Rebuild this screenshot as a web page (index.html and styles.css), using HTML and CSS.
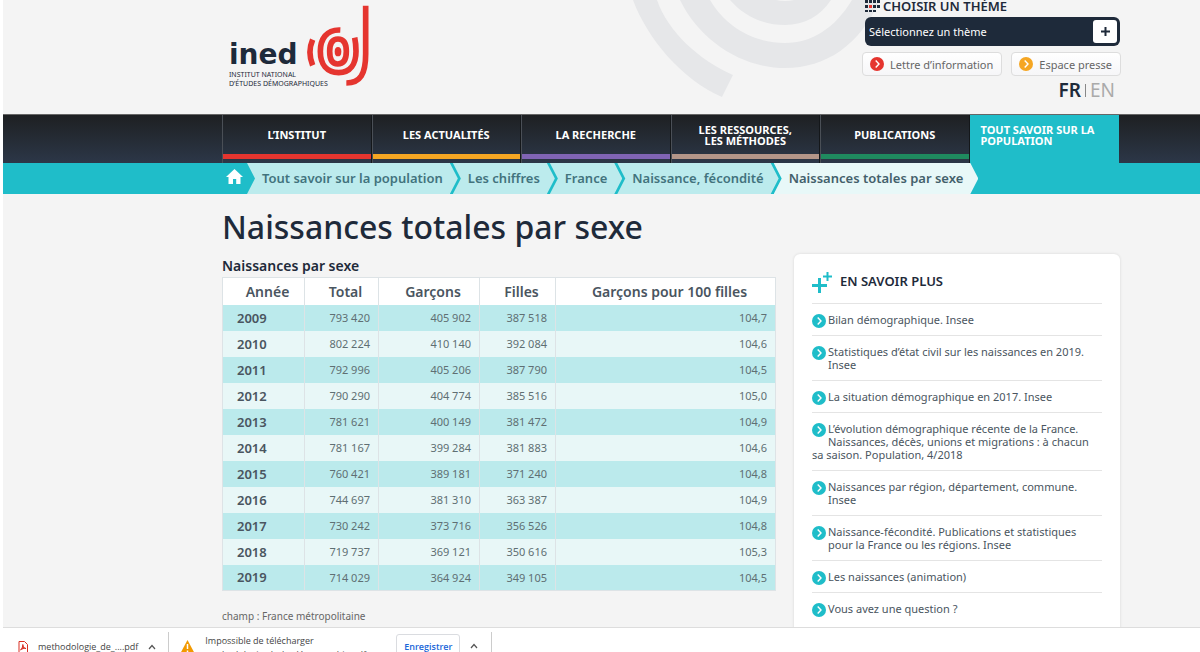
FILE: index.html
```html
<!DOCTYPE html>
<html lang="fr">
<head>
    <meta charset="UTF-8">
    <title>Naissances totales par sexe</title>
    <link rel="stylesheet" href="styles.css">
</head>
<body>
<!--symboles réutilisés-->
<svg class="defs" aria-hidden="true">
    <symbol id="arrow" viewBox="0 0 14 14">
        <circle cx="7" cy="7" r="7" fill="currentColor"/>
        <path d="M5.7 3.6 L9 7.1 L5.7 10.6" fill="none" stroke="#fff" stroke-width="1.4"/>
    </symbol>
    <symbol id="caret" viewBox="0 0 8 6">
        <path d="M1 5 L4 1.5 L7 5" fill="none" stroke="#555" stroke-width="1.2"/>
    </symbol>
</svg>
<div class="page">
    <header class="header">
        <svg class="spiral" viewBox="0 0 260 114" aria-hidden="true">
            <path d="M13 0 C27 38 62 80 102 97 L113 75 C79 60 48 32 37 0 Z"/>
            <path d="M60 0 C80 41 122 68 165 68 C206 68 240 45 260 0 L232 0 C215 28 192 43 165 43 C134 43 106 27 90 0 Z"/>
            <path d="M110 0 C124 16 143 25 165 25 C185 25 200 16 211 0 L174 0 Q165 2 156 0 Z"/>
        </svg>
        <a class="logo" href="#">
            <span class="logo-text">
                <strong>ined</strong>
                <small>INSTITUT NATIONAL<br>D’ÉTUDES DÉMOGRAPHIQUES</small>
            </span>
            <svg viewBox="290 13 186 246" width="62" height="82" fill="none" stroke="#e5352f" stroke-width="17" aria-hidden="true">
                <ellipse cx="383" cy="153" rx="10" ry="14" fill="#e5352f" stroke="none"/>
                <path d="M383 115 C400 115 408 128 408 152 C408 177 400 190 382 190 C365 190 358 177 358 152 C358 128 366 115 383 115 Z"/>
                <path d="M390 88 C348 86 330 116 330 152 C330 192 350 216 385 216 C420 216 437 190 437 152 C437 135 436 125 433 111"/>
                <path d="M307 117 C297 140 297 170 307 194"/>
                <path d="M466 15 L466 160 C466 220 450 247 408 247"/>
            </svg>
        </a>
        <div class="tools">
            <label class="theme-label" for="theme">
                <svg width="15" height="13" viewBox="0 0 15 13" fill="#1e2a3a" aria-hidden="true">
                    <path d="M0 0h3v3H0zM4 0h3v3H4zM8 0h3v3H8zM12 0h3v3h-3zM0 5h3v3H0zM8 5h3v3H8zM12 5h3v3h-3zM0 10h3v2H0zM4 10h3v2H4zM8 10h3v2H8z"/>
                    <path d="M4 5h3v3H4z" fill="#e5352f"/>
                </svg>
                CHOISIR UN THÈME
            </label>
            <div class="theme">
                <select id="theme">
                    <option>Sélectionnez un thème</option>
                </select>
                <button type="button" aria-label="Ouvrir">
                    <svg width="9" height="9" viewBox="0 0 9 9"><path d="M4.5 0v9M0 4.5h9" stroke="#1e2a3a" stroke-width="2"/></svg>
                </button>
            </div>
            <div class="links">
                <a href="#"><svg class="red" width="14" height="14"><use href="#arrow"/></svg>Lettre d’information</a>
                <a href="#"><svg class="orange" width="14" height="14"><use href="#arrow"/></svg>Espace presse</a>
            </div>
            <div class="lang"><a class="current" href="#">FR</a><i></i><a href="#">EN</a></div>
        </div>
    </header>

    <nav class="nav">
        <ul>
            <li class="institut"><a href="#">L’INSTITUT</a></li>
            <li class="actualites"><a href="#">LES ACTUALITÉS</a></li>
            <li class="recherche"><a href="#">LA RECHERCHE</a></li>
            <li class="ressources"><a href="#">LES RESSOURCES,<br>LES MÉTHODES</a></li>
            <li class="publications"><a href="#">PUBLICATIONS</a></li>
            <li class="active"><a href="#">TOUT SAVOIR SUR LA<br>POPULATION</a></li>
        </ul>
    </nav>

    <div class="breadcrumb">
        <a class="home" href="#" aria-label="Accueil">
            <svg width="17" height="15" viewBox="0 0 17 15"><path d="M8.5 0 L17 8 H14.5 V15 H10.2 V10 H7 V15 H2.5 V8 H0 Z" fill="#fff"/></svg>
        </a>
        <ul>
            <li><a href="#">Tout savoir sur la population</a></li>
            <li><a href="#">Les chiffres</a></li>
            <li><a href="#">France</a></li>
            <li><a href="#">Naissance, fécondité</a></li>
            <li class="last">Naissances totales par sexe</li>
        </ul>
    </div>

    <div class="content">
        <main>
            <h1>Naissances totales par sexe</h1>
            <table>
                <caption>Naissances par sexe</caption>
                <colgroup><col class="c1"><col class="c2"><col class="c3"><col class="c4"><col></colgroup>
                <thead>
                <tr><th>Année</th><th>Total</th><th>Garçons</th><th>Filles</th><th>Garçons pour 100 filles</th></tr>
                </thead>
                <tbody>
                <tr><th>2009</th><td>793 420</td><td>405 902</td><td>387 518</td><td>104,7</td></tr>
                <tr><th>2010</th><td>802 224</td><td>410 140</td><td>392 084</td><td>104,6</td></tr>
                <tr><th>2011</th><td>792 996</td><td>405 206</td><td>387 790</td><td>104,5</td></tr>
                <tr><th>2012</th><td>790 290</td><td>404 774</td><td>385 516</td><td>105,0</td></tr>
                <tr><th>2013</th><td>781 621</td><td>400 149</td><td>381 472</td><td>104,9</td></tr>
                <tr><th>2014</th><td>781 167</td><td>399 284</td><td>381 883</td><td>104,6</td></tr>
                <tr><th>2015</th><td>760 421</td><td>389 181</td><td>371 240</td><td>104,8</td></tr>
                <tr><th>2016</th><td>744 697</td><td>381 310</td><td>363 387</td><td>104,9</td></tr>
                <tr><th>2017</th><td>730 242</td><td>373 716</td><td>356 526</td><td>104,8</td></tr>
                <tr><th>2018</th><td>719 737</td><td>369 121</td><td>350 616</td><td>105,3</td></tr>
                <tr><th>2019</th><td>714 029</td><td>364 924</td><td>349 105</td><td>104,5</td></tr>
                </tbody>
            </table>
            <p class="note">champ : France métropolitaine</p>
        </main>

        <aside class="more">
            <h2>
                <svg width="20" height="21" viewBox="0 0 20 21" stroke="#1fbdc9" aria-hidden="true">
                    <path d="M7.5 6v15M0 13.5h15" stroke-width="3"/>
                    <path d="M15.5 0v9M11 4.5h9" stroke-width="2"/>
                </svg>
                EN SAVOIR PLUS
            </h2>
            <ul>
                <li><a href="#"><svg width="14" height="14"><use href="#arrow"/></svg>Bilan démographique. Insee</a></li>
                <li><a href="#"><svg width="14" height="14"><use href="#arrow"/></svg>Statistiques d’état civil sur les naissances en 2019. Insee</a></li>
                <li><a href="#"><svg width="14" height="14"><use href="#arrow"/></svg>La situation démographique en 2017. Insee</a></li>
                <li><a href="#"><svg width="14" height="14"><use href="#arrow"/></svg>L’évolution démographique récente de la France. Naissances, décès, unions et migrations : à chacun sa saison. Population, 4/2018</a></li>
                <li><a href="#"><svg width="14" height="14"><use href="#arrow"/></svg>Naissances par région, département, commune.<br>Insee</a></li>
                <li><a href="#"><svg width="14" height="14"><use href="#arrow"/></svg>Naissance-fécondité. Publications et statistiques pour la France ou les régions. Insee</a></li>
                <li><a href="#"><svg width="14" height="14"><use href="#arrow"/></svg>Les naissances (animation)</a></li>
                <li><a href="#"><svg width="14" height="14"><use href="#arrow"/></svg>Vous avez une question ?</a></li>
            </ul>
        </aside>
    </div>
</div>

<!--barre des téléchargements-->
<div class="downloads">
    <div class="file">
        <svg width="10" height="12" viewBox="0 0 10 12" aria-hidden="true">
            <path d="M1 .5 H6.5 L9.5 3.5 V11.5 H1 Z" fill="#fff" stroke="#d93025"/>
            <path d="M2.5 9 C4 8 5 5 4.8 3.5 C5 6 6.5 7.5 8 7.5 C6 7 4 7.8 2.5 9 Z" fill="#d93025" stroke="#d93025"/>
        </svg>
        <span class="name">methodologie_de_....pdf</span>
        <button type="button" aria-label="Options"><svg width="8" height="6"><use href="#caret"/></svg></button>
    </div>
    <div class="file blocked">
        <svg width="15" height="14" viewBox="0 0 15 14" aria-hidden="true">
            <path d="M7.5 0 L15 14 H0 Z" fill="#f29900"/>
            <path d="M7.5 4v5M7.5 10.5v2" stroke="#fff" stroke-width="1.5"/>
        </svg>
        <span class="message">Impossible de télécharger<br>methodologie_de_la_démographie.pdf</span>
        <button type="button" class="save">Enregistrer</button>
        <button type="button" aria-label="Options"><svg width="8" height="6"><use href="#caret"/></svg></button>
    </div>
</div>
</body>
</html>
```
FILE: styles.css
```css
* {
    margin: 0;
    padding: 0;
    box-sizing: border-box;
}

body {
    display: flex;
    flex-direction: column;
    height: 100vh;
    overflow: hidden;
    background: #fff;
    color: #4a5560;
    font-family: "Noto Sans", "Open Sans", sans-serif;
    font-size: 11px;
}

ul {
    list-style: none;
}

a {
    color: inherit;
    text-decoration: none;
}

button, select {
    font-family: inherit;
    border: 0;
    background: none;
    cursor: pointer;
}

.defs {
    position: absolute;
    width: 0;
    height: 0;
}

.page {
    flex: 1;
    min-height: 0;
    margin-left: 3px;
    overflow: hidden;
    background: #f4f4f4;
}

/* header */
.header {
    position: relative;
    display: flex;
    justify-content: space-between;
    height: 114px;
    padding: 0 79px 0 226px;
}

.spiral {
    position: absolute;
    top: 0;
    right: 320px;
    width: 260px;
    height: 114px;
    fill: #e6e7e9;
}

.logo {
    display: flex;
    align-items: flex-start;
    gap: 8px;
    padding-top: 5px;
    color: #1e2a3a;
}

.logo-text {
    width: 70px;
    padding-top: 35px;
    white-space: nowrap;
}

.logo-text strong {
    display: block;
    font-family: "DejaVu Sans", sans-serif;
    font-size: 28px;
    line-height: 30px;
}

.logo-text small {
    display: block;
    font-size: 7px;
    line-height: 9px;
}

.tools {
    position: relative;
    display: flex;
    flex-direction: column;
    width: 259px;
}

.theme-label {
    display: flex;
    gap: 3px;
    padding-left: 3px;
    color: #1e2a3a;
    font-size: 13px;
    font-weight: 600;
    line-height: 13px;
}

.theme {
    display: flex;
    align-items: center;
    height: 29px;
    margin: 4px 1px 6px 3px;
    padding-right: 3px;
    border-radius: 6px;
    background: #1e2a3a;
}

.theme select {
    flex: 1;
    height: 29px;
    padding-left: 4px;
    color: #fff;
    font-size: 11px;
    appearance: none;
}

.theme button {
    display: flex;
    align-items: center;
    justify-content: center;
    width: 24px;
    height: 23px;
    border-radius: 3px;
    background: #fff;
}

.links {
    display: flex;
    justify-content: space-between;
}

.links a {
    display: flex;
    align-items: center;
    gap: 6px;
    height: 24px;
    padding: 0 8px 0 7px;
    border: 1px solid #ddd;
    border-radius: 4px;
    background: linear-gradient(#fff, #f6f6f8);
    color: #666;
    white-space: nowrap;
}

.red {
    color: #e5352f;
}

.orange {
    color: #f5a623;
}

.lang {
    display: flex;
    align-items: center;
    justify-content: flex-end;
    gap: 4px;
    padding-right: 6px;
    color: #aaa;
    font-size: 19px;
    line-height: 28px;
}

.lang i {
    width: 1px;
    height: 13px;
    background: #888;
}

.lang .current {
    color: #1e2a3a;
    font-weight: 600;
}

/* menu */
.nav {
    padding: 0 81px 0 219px;
    border-top: 1px solid #666;
    background: linear-gradient(#1e2022, #2c3748);
}

.nav ul {
    display: grid;
    grid-template-columns: repeat(6, 1fr);
}

.nav li {
    height: 48px;
    padding-bottom: 4px;
    border-left: 1px solid #4a4f56;
    border-right: 1px solid #14171a;
    color: #fff;
    font-weight: 700;
    line-height: 11px;
    text-align: center;
}

.nav li a {
    display: flex;
    align-items: center;
    justify-content: center;
    height: 44px;
    border-bottom: 5px solid #e5352f;
}

.nav .actualites a {
    border-color: #f5a623;
}

.nav .recherche a {
    border-color: #8064b4;
}

.nav .ressources a {
    border-color: #b39588;
}

.nav .publications a {
    border-color: #1f8a5f;
}

.nav .active {
    border-color: #1fbdc9;
    background: #1fbdc9;
    text-align: left;
}

.nav .active a {
    justify-content: flex-start;
    padding-left: 10px;
    border-color: #1fbdc9;
}

/* fil d'ariane */
.breadcrumb {
    display: flex;
    height: 31px;
    padding-left: 219px;
    background: #1fbdc9;
    color: #42737d;
    font-size: 13px;
    font-weight: 600;
    line-height: 31px;
    white-space: nowrap;
}

.breadcrumb ul {
    display: flex;
}

.home {
    width: 25px;
    padding: 6px 4px;
    line-height: 0;
}

.breadcrumb li {
    margin-left: -5px;
    padding: 0 15px;
    background: #bcebed;
    clip-path: polygon(0 0, calc(100% - 8px) 0, 100% 50%, calc(100% - 8px) 100%, 0 100%, 8px 50%);
}

.breadcrumb li:first-child {
    margin-left: 0;
}

.breadcrumb .last {
    background: #e8f8f8;
    color: #43606b;
}

/* contenu */
.content {
    display: flex;
    align-items: flex-start;
    gap: 18px;
    padding: 0 80px 0 219px;
}

main {
    flex: 1;
}

h1 {
    padding: 11px 0 8px;
    color: #1e2a3a;
    font-size: 32px;
    font-weight: 500;
    line-height: 44px;
}

table {
    width: 100%;
    border-collapse: collapse;
    table-layout: fixed;
}

caption {
    padding-bottom: 2px;
    color: #1e2a3a;
    font-size: 14px;
    font-weight: 600;
    line-height: 18px;
    text-align: left;
}

.c1 {
    width: 82px;
}

.c2 {
    width: 74px;
}

.c3 {
    width: 101px;
}

.c4 {
    width: 76px;
}

th, td {
    height: 26px;
    padding: 0 8px;
    border: solid #dde3e6;
    border-width: 0 1px;
}

thead th {
    height: 27px;
    padding-left: 16px;
    border-top-width: 1px;
    background: #fff;
    font-size: 14px;
    font-weight: 600;
}

tbody th {
    padding-left: 14px;
    font-size: 13px;
    font-weight: 600;
    text-align: left;
}

td {
    color: #5f6f73;
    text-align: right;
}

tbody tr {
    background: #e8f7f7;
}

tbody tr:nth-child(odd) {
    background: #bbeaec;
}

tbody tr:last-child > * {
    border-bottom-width: 1px;
}

.note {
    margin-top: 17px;
    color: #666;
    font-size: 10px;
    line-height: 16px;
}

.more {
    width: 326px;
    margin-top: 60px;
    padding: 18px 18px 30px;
    border-radius: 6px;
    background: #fff;
    box-shadow: 0 0 3px rgba(0, 0, 0, .12);
}

.more h2 {
    display: flex;
    align-items: flex-start;
    gap: 8px;
    height: 31px;
    color: #1e2a3a;
    font-size: 13px;
    font-weight: 600;
    line-height: 19px;
}

.more li {
    padding: 9px 0;
    border-top: 1px solid #e4e4e4;
    line-height: 13px;
}

.more li svg {
    float: left;
    margin: 1px 2px 0 0;
    color: #1fbdc9;
}

/* téléchargements */
.downloads {
    display: flex;
    height: 25px;
    margin-left: 3px;
    padding-top: 4px;
    overflow: hidden;
    border-top: 1px solid #ddd;
    color: #444;
    font-family: "Open Sans", sans-serif;
    font-size: 9px;
    line-height: 14px;
}

.file {
    display: flex;
    align-items: center;
    gap: 10px;
    height: 30px;
    padding: 0 12px 0 15px;
    border-right: 1px solid #ccc;
}

.file button {
    display: flex;
    align-items: center;
}

.blocked {
    align-items: flex-start;
    padding: 2px 13px 0 11px;
}

.blocked > svg {
    margin-top: 6px;
}

.blocked .message {
    width: 181px;
    white-space: nowrap;
}

.file .save {
    justify-content: center;
    width: 64px;
    height: 24px;
    border: 1px solid #dadce0;
    border-radius: 3px;
    color: #1a66d8;
    font-size: 9px;
    font-weight: 600;
}

.blocked button {
    height: 24px;
}
```
